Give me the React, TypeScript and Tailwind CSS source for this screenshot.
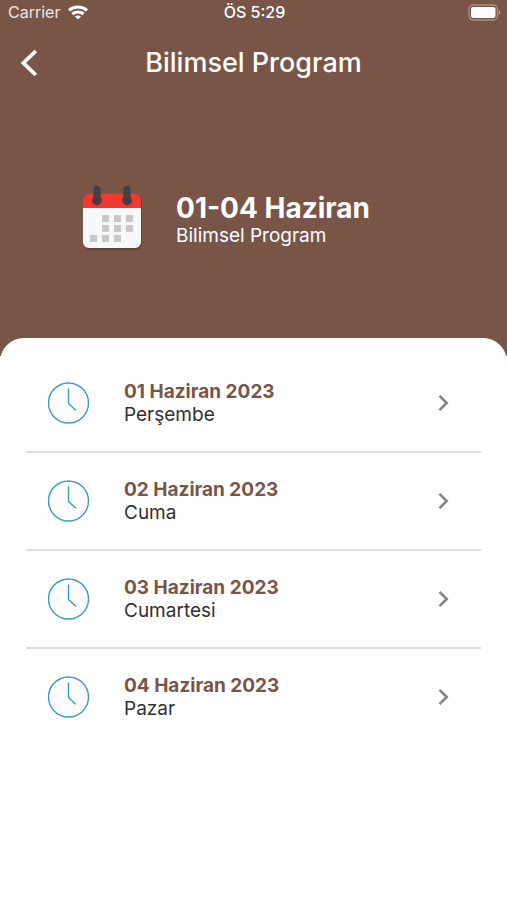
const days = [
  { date: "01 Haziran 2023", name: "Perşembe" },
  { date: "02 Haziran 2023", name: "Cuma" },
  { date: "03 Haziran 2023", name: "Cumartesi" },
  { date: "04 Haziran 2023", name: "Pazar" },
]

function WifiIcon() {
  return (
    <svg viewBox="0 0 20 15" className="h-[15px] w-5" fill="none" stroke="currentColor" strokeWidth="3" aria-hidden="true">
      <path d="M1 5.3C6 .9 14 .9 19 5.3" />
      <path d="M4.3 9c3.3-2.8 8.1-2.8 11.4 0" />
      <path d="M10 14.6 6.9 11.5c1.8-1.5 4.4-1.5 6.2 0Z" fill="currentColor" stroke="none" />
    </svg>
  )
}

function BatteryIcon() {
  return (
    <svg viewBox="0 0 33 17" className="h-[17px] w-[33px]" fill="none" aria-hidden="true">
      <rect x="1" y="1" width="28.5" height="15" rx="4" stroke="#fff" strokeOpacity=".35" strokeWidth="1.3" />
      <rect x="3" y="3" width="24.5" height="11" rx="2.2" fill="#fff" />
      <path d="M31 6.2c1.6.7 1.6 3.9 0 4.6Z" fill="#fff" fillOpacity=".5" />
    </svg>
  )
}

function CalendarIcon() {
  const cells = [
    [20, 30], [32, 30], [44, 30],
    [20, 40], [32, 40], [44, 40],
    [8, 50], [20, 50], [32, 50],
  ]
  return (
    <svg viewBox="0 0 60 66" className="h-[66px] w-[60px] overflow-visible" aria-hidden="true">
      <rect x="2" y="11" width="58" height="54" rx="6" fill="#000" fillOpacity=".2" />
      <path d="M1 20h58v37a6 6 0 0 1-6 6H7a6 6 0 0 1-6-6Z" fill="#f8f8f8" />
      <path d="M1 23v-8a6 6 0 0 1 6-6h46a6 6 0 0 1 6 6v8Z" fill="#f03a2f" />
      <circle cx="15" cy="15.5" r="5" fill="#8f2b26" />
      <circle cx="45" cy="15.5" r="5" fill="#8f2b26" />
      <path d="M15 4.5V16M45 4.5V16" stroke="#3f4144" strokeWidth="7" strokeLinecap="round" />
      {cells.map(([x, y]) => (
        <rect key={`${x}-${y}`} x={x} y={y} width="7" height="7" fill="#c8c8c8" />
      ))}
    </svg>
  )
}

function ClockIcon() {
  return (
    <svg viewBox="0 0 42 42" className="size-[42px] shrink-0" fill="none" stroke="#3a9bcb" strokeWidth="1.4" aria-hidden="true">
      <circle cx="20.5" cy="21" r="20" fill="#fcfcfd" />
      <path d="M20.5 7v14.5l7 6.5" strokeLinecap="round" strokeLinejoin="round" />
    </svg>
  )
}

export default function App() {
  return (
    <div className="min-h-screen bg-white font-['Inter',sans-serif] text-[#303030]">
      <header className="bg-[#795548] pb-[105px] text-white">
        <div className="grid h-6 grid-cols-[1fr_auto_1fr] items-center pr-1.5 pl-2 text-base leading-6">
          <div className="flex items-center gap-2 text-white/85">
            Carrier
            <span className="text-white">
              <WifiIcon />
            </span>
          </div>
          <div className="text-center font-medium">ÖS 5:29</div>
          <div className="flex justify-end">
            <BatteryIcon />
          </div>
        </div>

        <div className="grid h-[78px] grid-cols-[60px_1fr_60px] items-center">
          <button type="button" aria-label="Geri" className="flex h-12 items-center pl-5">
            <svg viewBox="0 0 18 28" className="h-7 w-[18px]" fill="none" stroke="currentColor" strokeWidth="3.8" aria-hidden="true">
              <path d="M15.8 2 3.4 14l12.4 12" />
            </svg>
          </button>
          <h1 className="text-center text-[27px] leading-8 font-medium">Bilimsel Program</h1>
        </div>

        <div className="mt-[83px] flex items-center gap-[34px] pl-[82px]">
          <CalendarIcon />
          <div className="pt-1">
            <h2 className="text-[28px] leading-8 font-bold">01-04 Haziran</h2>
            <p className="text-[19px] leading-6">Bilimsel Program</p>
          </div>
        </div>
      </header>

      <main className="relative -mt-[18px] rounded-t-3xl bg-white px-[26px] pt-[17px]">
        <ul>
          {days.map((day) => (
            <li key={day.date} className="border-b-2 border-[#dedede] last:border-b-0">
              <button type="button" className="flex h-24 w-full items-center pr-7 pl-[22px] text-left">
                <ClockIcon />
                <span className="ml-[34px] flex-1">
                  <span className="block text-[19px] leading-[23px] font-bold text-[#795548]">{day.date}</span>
                  <span className="block text-[19px] leading-[23px]">{day.name}</span>
                </span>
                <svg viewBox="0 0 20 20" className="size-5" fill="none" stroke="#858585" strokeWidth="2.6" aria-hidden="true">
                  <path d="m6.5 2.8 7.2 7.2-7.2 7.2" />
                </svg>
              </button>
            </li>
          ))}
        </ul>
      </main>
    </div>
  )
}
